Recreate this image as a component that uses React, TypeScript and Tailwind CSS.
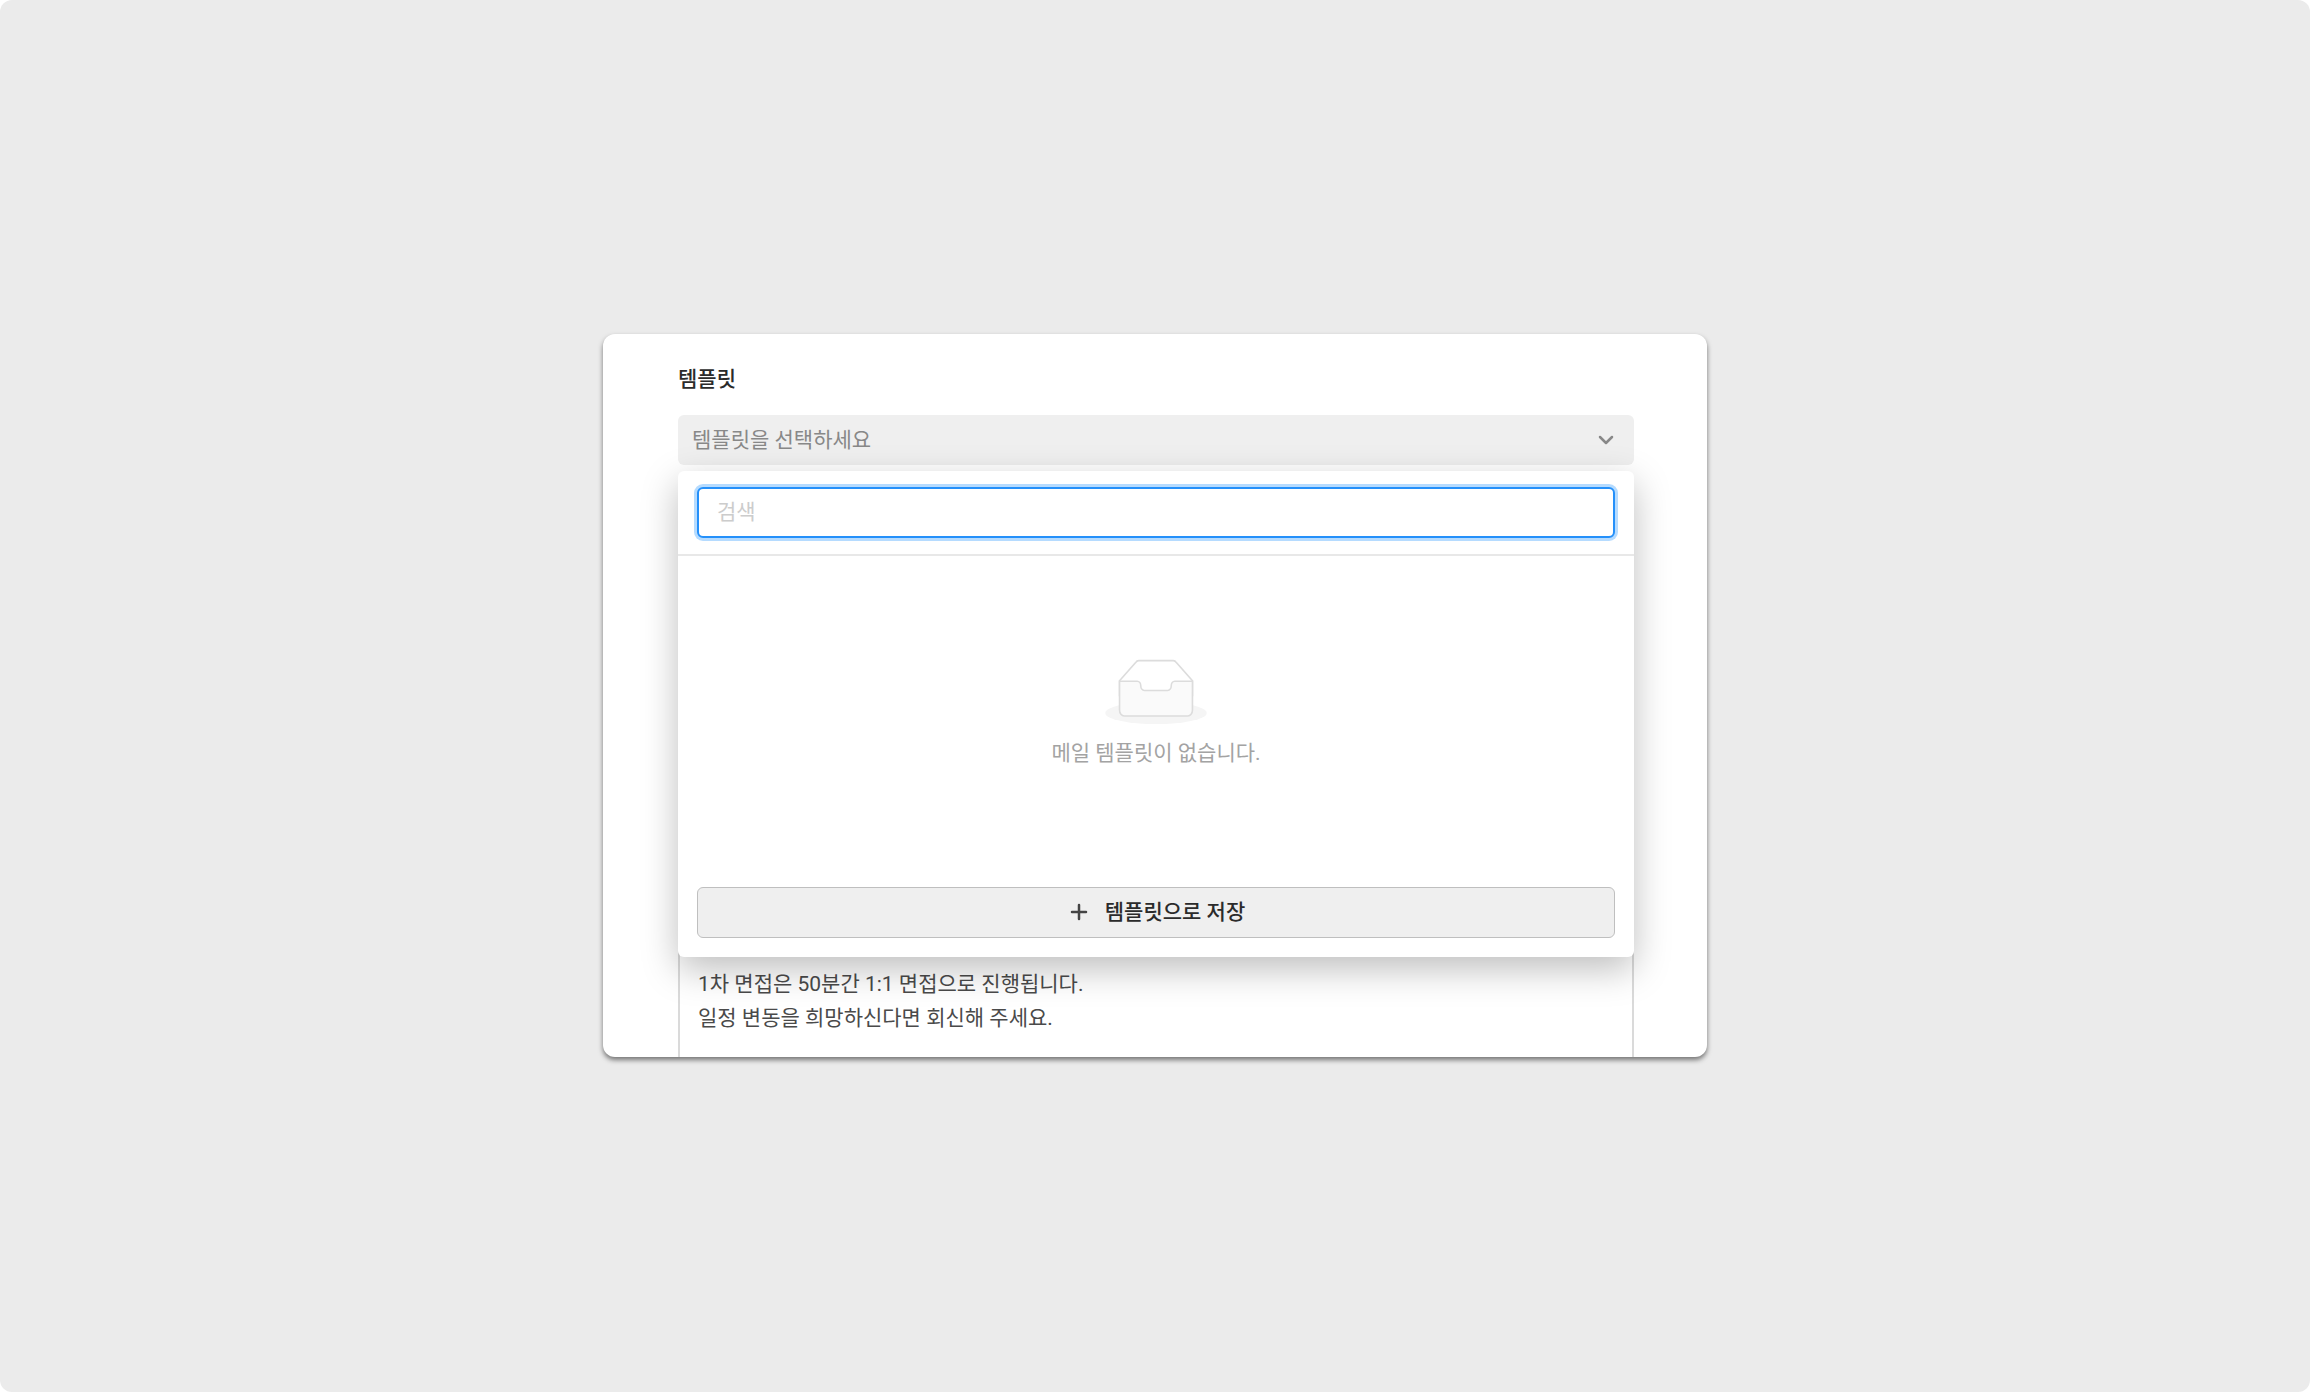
import React, { useState } from "react";
import { ChevronDown, Plus } from "lucide-react";

const DEFAULT_BODY =
  "1차 면접은 50분간 1:1 면접으로 진행됩니다.\n일정 변동을 희망하신다면 회신해 주세요.";

function EmptyBox() {
  return (
    <svg width="102" height="65" viewBox="0 0 64 41" aria-hidden="true">
      <g transform="translate(0 1)" fill="none" fillRule="evenodd">
        <ellipse fill="#f5f5f5" cx="32" cy="33" rx="32" ry="7" />
        <g fillRule="nonzero" stroke="#dcdcdc">
          <path
            fill="#ffffff"
            d="M55 12.76L44.854 1.258C44.367.474 43.656 0 42.907 0H21.093c-.749 0-1.46.474-1.947 1.257L9 12.761V22h46v-9.24z"
          />
          <path
            fill="#fafafa"
            d="M41.613 15.931c0-1.605.994-2.93 2.227-2.931H55v18.137C55 33.26 53.68 35 52.05 35h-40.1C10.32 35 9 33.259 9 31.137V13h11.16c1.233 0 2.227 1.323 2.227 2.928v.022c0 1.605 1.005 2.901 2.237 2.901h14.752c1.232 0 2.237-1.308 2.237-2.913v-.007z"
          />
        </g>
      </g>
    </svg>
  );
}

function TemplatePanel() {
  const [query, setQuery] = useState("");

  return (
    <div className="absolute inset-x-0 top-full z-10 mt-[6px] flex h-[486px] flex-col rounded-md bg-white shadow-[0_12px_36px_rgba(0,0,0,0.26)]">
      <div className="border-b-2 border-[#e8e8e8] px-[19px] py-4">
        <input
          type="text"
          value={query}
          onChange={(e) => setQuery(e.target.value)}
          placeholder="검색"
          aria-label="검색"
          className="block h-[51px] w-full rounded-md border-2 border-[#2490fa] bg-white px-[18px] outline-none ring-3 ring-[#b5dbff] placeholder:text-[#cccccc]"
        />
      </div>

      {/* Empty state */}
      <div className="flex flex-1 flex-col items-center justify-center gap-3 pb-[14px] text-[#a3a3a3]">
        <EmptyBox />
        <p>메일 템플릿이 없습니다.</p>
      </div>

      <div className="px-[19px] pb-[19px]">
        <button
          type="button"
          className="flex h-[51px] w-full items-center justify-center gap-[14px] rounded-md border border-[#bfbfbf] bg-[#efefef] font-medium text-[#2b2b2b]"
        >
          <Plus size={24} strokeWidth={2.5} color="#444444" aria-hidden="true" />
          템플릿으로 저장
        </button>
      </div>
    </div>
  );
}

export default function App() {
  const [open, setOpen] = useState(true);
  const [body, setBody] = useState(DEFAULT_BODY);

  return (
    <div className="bg-white font-[Roboto,'Noto_Sans_CJK_KR',sans-serif] text-[21px] leading-[34px]">
      <main className="flex min-h-screen items-center justify-center rounded-xl bg-[#ebebeb] pb-0.5">
        <section className="w-full max-w-[1104px] overflow-hidden rounded-xl bg-white pt-7 pr-[73px] pl-[75px] shadow-[0_3px_5px_rgba(0,0,0,0.5)]">
          <h2 id="template-label" className="font-medium text-[#2b2b2b]">
            템플릿
          </h2>

          <div className="relative mt-[19px]">
            <button
              type="button"
              aria-labelledby="template-label"
              aria-haspopup="dialog"
              aria-expanded={open}
              onClick={() => setOpen(!open)}
              className="flex h-[50px] w-full items-center justify-between rounded-md bg-[#efefef] pr-4 pl-[14px] text-[#888888]"
            >
              템플릿을 선택하세요
              <ChevronDown size={24} strokeWidth={2.5} aria-hidden="true" />
            </button>
            {open && <TemplatePanel />}
          </div>

          <textarea
            value={body}
            onChange={(e) => setBody(e.target.value)}
            aria-label="메일 본문"
            className="mt-[476px] block h-[116px] w-full resize-none overflow-hidden border-2 border-b-0 border-[#dadada] px-[18px] pt-6 text-[#4a4a4a] outline-none"
          />
        </section>
      </main>
    </div>
  );
}
